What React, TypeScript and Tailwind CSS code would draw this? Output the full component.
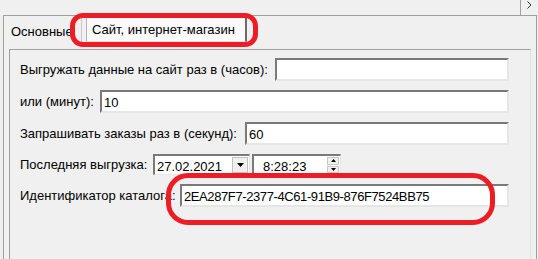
const font = { fontFamily: '"Liberation Sans", Arial, sans-serif' };

function Field({ value = '', className = '' }: { value?: string; className?: string }) {
    return (
        <div
            className={`h-[23px] bg-white border-t-2 border-l-2 border-t-[#7a7a7a] border-l-[#7a7a7a] border-r-2 border-b-2 border-r-[#e6e6e6] border-b-[#e6e6e6] pl-[2px] pt-[3px] leading-[15px] ${className}`}
        >
            {value}
        </div>
    );
}

export default function App() {
    return (
        <div className="relative w-[538px] h-[259px] overflow-hidden bg-[#f0f0f0] text-[13px] text-black" style={font}>
            {/* strip above the page control, with the tab scroll arrow */}
            <div className="h-[15px] flex justify-end">
                <div className="w-[18px] border-l border-[#a0a0a0] pl-[6px] pt-[1px]">
                    <svg width="5" height="8" viewBox="0 0 5 8">
                        <path d="M0.5 0.5L4 4L0.5 7.5" fill="none" stroke="#333" strokeWidth="1" />
                    </svg>
                </div>
            </div>

            <div className="ml-[3px] mr-[1px] h-[244px] border-t border-l border-r border-[#a0a0a0] flex flex-col">
                {/* tabs */}
                <div className="h-[33px] flex items-start">
                    <div className="pl-[7px] pt-[6px] w-[77px]">Основные</div>
                    <div className="mt-[1px] h-[25px] w-[166px] border-l border-[#c8c8c8] pl-[4px] flex">
                        <div className="flex-1 bg-[#fafafa] border-t border-l border-[#b4b4b4] border-r-2 border-r-[#6a6a6a] border-b border-b-[#e0e0e0] pl-[5px] pt-[4px] leading-[15px]">
                            Сайт, интернет-магазин
                        </div>
                    </div>
                </div>

                {/* group box */}
                <div className="flex-1 ml-[5px] mr-[5px] border-t border-l border-[#a0a0a0] border-r border-r-[#e2e2e2] pl-[10px] pr-[21px] pt-[8px] flex flex-col gap-[9px]">
                    <div className="flex items-center">
                        <div className="w-[255px]">Выгружать данные на сайт раз в (часов):</div>
                        <Field className="flex-1" />
                    </div>
                    <div className="flex items-center">
                        <div className="w-[80px]">или (минут):</div>
                        <Field className="flex-1" value="10" />
                    </div>
                    <div className="flex items-center">
                        <div className="w-[225px]">Запрашивать заказы раз в (секунд):</div>
                        <Field className="flex-1" value="60" />
                    </div>
                    <div className="flex items-center h-[21px]">
                        <div className="w-[133px]">Последняя выгрузка:</div>
                        <div className="w-[97px] h-[21px] bg-white border-t-2 border-l-2 border-[#7a7a7a] border-r border-b border-r-[#e6e6e6] border-b-[#e6e6e6] flex">
                            <div className="flex-1 pl-[2px] pt-[3px] leading-[15px]">27.02.2021</div>
                            <div className="w-[16px] my-[1px] mr-[1px] bg-[#f0f0f0] border border-[#c0c0c0] flex items-center justify-center">
                                <svg width="7" height="4" viewBox="0 0 7 4"><path d="M0 0h7L3.5 4z" fill="#000" /></svg>
                            </div>
                        </div>
                        <div className="ml-[2px] w-[89px] h-[21px] bg-white border-t-2 border-l-2 border-[#7a7a7a] border-r border-b border-r-[#e6e6e6] border-b-[#e6e6e6] flex">
                            <div className="flex-1 pl-[9px] pt-[3px] leading-[15px]">8:28:23</div>
                            <div className="w-[12px] mr-[1px] flex flex-col gap-px py-[1px]">
                                <div className="flex-1 bg-[#f0f0f0] border border-[#c8c8c8] flex items-center justify-center">
                                    <svg width="5" height="3" viewBox="0 0 5 3"><path d="M2.5 0L5 3H0z" fill="#000" /></svg>
                                </div>
                                <div className="flex-1 bg-[#f0f0f0] border border-[#c8c8c8] flex items-center justify-center">
                                    <svg width="5" height="3" viewBox="0 0 5 3"><path d="M0 0h5L2.5 3z" fill="#000" /></svg>
                                </div>
                            </div>
                        </div>
                    </div>
                    <div className="flex items-center">
                        <div className="w-[160px]">Идентификатор каталога:</div>
                        <Field className="flex-1 tracking-[-0.4px]" value="2EA287F7-2377-4C61-91B9-876F7524BB75" />
                    </div>
                </div>
            </div>

            {/* red annotation marks */}
            <div className="absolute left-[70px] top-[13px] w-[188px] h-[34px] border-[5px] border-[#ee1c24] rounded-[13px]" />
            <div className="absolute left-[166px] top-[173px] w-[329px] h-[52px] border-[5px] border-[#ee1c24] rounded-[22px]" />
        </div>
    );
}
